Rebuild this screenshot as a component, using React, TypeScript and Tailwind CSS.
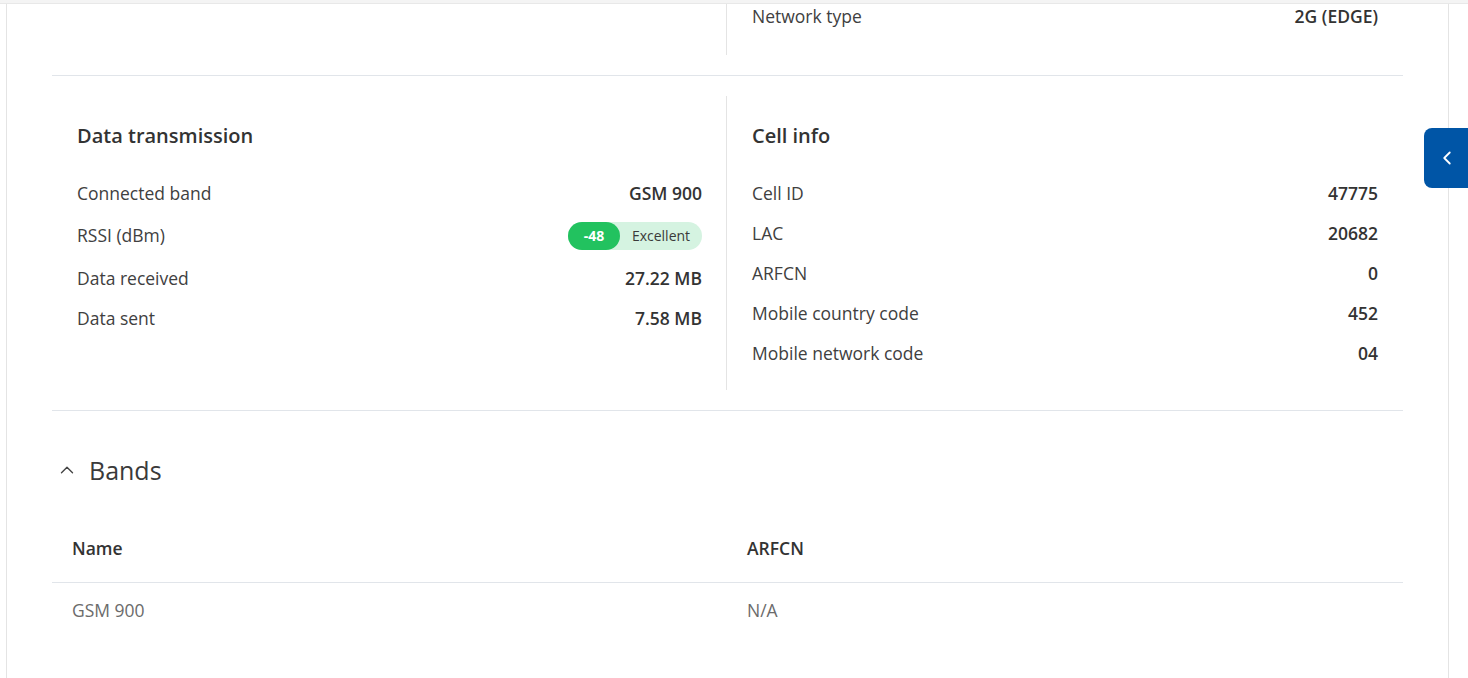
import { ChevronLeft, ChevronUp } from "lucide-react";

const dataRows = [
  { label: "Connected band", value: "GSM 900" },
  { label: "RSSI (dBm)", value: null },
  { label: "Data received", value: "27.22 MB" },
  { label: "Data sent", value: "7.58 MB" },
];

const cellRows = [
  { label: "Cell ID", value: "47775" },
  { label: "LAC", value: "20682" },
  { label: "ARFCN", value: "0" },
  { label: "Mobile country code", value: "452" },
  { label: "Mobile network code", value: "04" },
];

function Row({ label, children, tall }: { label: string; children: React.ReactNode; tall?: boolean }) {
  return (
    <div className={`flex items-center justify-between ${tall ? "h-[45px]" : "h-10"}`}>
      <span className="text-[17.5px] text-[#404040]">{label}</span>
      <span className="text-[17.5px] font-semibold text-[#333]">{children}</span>
    </div>
  );
}

function SignalBadge() {
  return (
    <span className="flex h-7 w-[134px] items-center rounded-full bg-[#d5f3e1] text-[14px]">
      <span className="flex h-7 w-[52px] items-center justify-center rounded-full bg-[#22c25f] font-bold text-white">-48</span>
      <span className="flex-1 text-center font-normal text-[#3a3a3a]">Excellent</span>
    </span>
  );
}

export default function App() {
  return (
    <div className="relative h-[678px] w-full overflow-hidden bg-white font-['Open_Sans',sans-serif]">
      <div className="h-[4px] border-b border-[#e8e8e8] bg-[#f4f4f4]" />
      <div className="ml-[6px] h-full w-[1443px] border-x border-[#e4e4e4] px-[45px]">
        {/* top, cut off section */}
        <div className="grid grid-cols-[674px_1fr] border-b border-[#e1e5ea] pb-5">
          <div />
          <div className="border-l border-[#e4e4e4] pb-[26px] pl-[25px] pr-[25px]">
            <div className="flex h-[25px] items-center justify-between">
              <span className="text-[17.5px] text-[#404040]">Network type</span>
              <span className="text-[17.5px] font-semibold text-[#333]">2G (EDGE)</span>
            </div>
          </div>
        </div>

        <div className="grid grid-cols-[674px_1fr] border-b border-[#e1e5ea] py-5">
          <div className="pb-[18px] pl-[25px] pr-[24px] pt-[26px]">
            <h3 className="mb-[23px] text-[20px] font-semibold leading-7 text-[#333]">Data transmission</h3>
            {dataRows.map((r) =>
              r.value ? (
                <Row key={r.label} label={r.label}>
                  {r.value}
                </Row>
              ) : (
                <Row key={r.label} label={r.label} tall>
                  <SignalBadge />
                </Row>
              )
            )}
          </div>
          <div className="border-l border-[#e4e4e4] pb-[17px] pl-[25px] pr-[25px] pt-[26px]">
            <h3 className="mb-[23px] text-[20px] font-semibold leading-7 text-[#333]">Cell info</h3>
            {cellRows.map((r) => (
              <Row key={r.label} label={r.label}>
                {r.value}
              </Row>
            ))}
          </div>
        </div>

        <div className="mt-[43px] flex items-center">
          <ChevronUp className="ml-[4px] h-[22px] w-[22px] text-[#444]" strokeWidth={1.5} />
          <h2 className="ml-[11px] text-[25px] font-medium leading-8 text-[#3a3a3a]">Bands</h2>
        </div>

        <div className="mt-[30px]">
          <div className="grid grid-cols-[675px_1fr] border-b border-[#e1e5ea]">
            <div className="pb-[22px] pl-5 pt-5 text-[17.5px] font-semibold leading-6 text-[#333]">Name</div>
            <div className="pb-[22px] pl-5 pt-5 text-[17.5px] font-semibold leading-6 text-[#333]">ARFCN</div>
          </div>
          <div className="grid grid-cols-[675px_1fr]">
            <div className="pl-5 pt-[15px] text-[17.5px] leading-6 text-[#6b6b6b]">GSM 900</div>
            <div className="pl-5 pt-[15px] text-[17.5px] leading-6 text-[#6b6b6b]">N/A</div>
          </div>
        </div>
      </div>

      <button className="absolute left-[1424px] top-[128px] flex h-[60px] w-[50px] items-center justify-start rounded-l-lg bg-[#0055a6] pl-[12px] text-white">
        <ChevronLeft className="h-[22px] w-[22px]" strokeWidth={2} />
      </button>
    </div>
  );
}
